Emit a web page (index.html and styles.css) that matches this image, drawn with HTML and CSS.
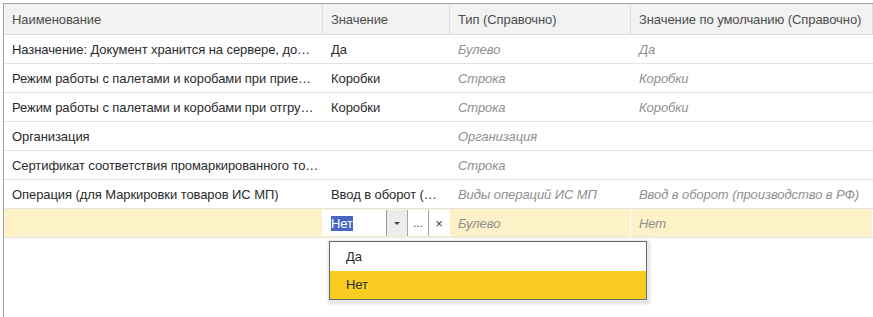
FILE: index.html
```html
<!DOCTYPE html>
<html lang="ru">
<head>
<meta charset="utf-8">
<title>Реквизиты</title>
<link rel="stylesheet" href="styles.css">
</head>
<body>
<div class="grid-wrap">
  <div class="row head">
    <div class="cell">Наименование</div>
    <div class="cell">Значение</div>
    <div class="cell">Тип (Справочно)</div>
    <div class="cell">Значение по умолчанию (Справочно)</div>
  </div>
  <div class="row">
    <div class="cell">Назначение: Документ хранится на сервере, до…</div>
    <div class="cell">Да</div>
    <div class="cell ref">Булево</div>
    <div class="cell ref">Да</div>
  </div>
  <div class="row">
    <div class="cell">Режим работы с палетами и коробами при прие…</div>
    <div class="cell">Коробки</div>
    <div class="cell ref">Строка</div>
    <div class="cell ref">Коробки</div>
  </div>
  <div class="row">
    <div class="cell">Режим работы с палетами и коробами при отгру…</div>
    <div class="cell">Коробки</div>
    <div class="cell ref">Строка</div>
    <div class="cell ref">Коробки</div>
  </div>
  <div class="row">
    <div class="cell">Организация</div>
    <div class="cell"></div>
    <div class="cell ref">Организация</div>
    <div class="cell ref"></div>
  </div>
  <div class="row">
    <div class="cell">Сертификат соответствия промаркированного то…</div>
    <div class="cell"></div>
    <div class="cell ref">Строка</div>
    <div class="cell ref"></div>
  </div>
  <div class="row">
    <div class="cell">Операция (для Маркировки товаров ИС МП)</div>
    <div class="cell">Ввод в оборот (…</div>
    <div class="cell ref">Виды операций ИС МП</div>
    <div class="cell ref">Ввод в оборот (производство в РФ)</div>
  </div>
  <div class="row editing">
    <div class="cell"></div>
    <div class="cell editor-cell">
      <div class="editor">
        <div class="editor-input"><span class="sel">Нет</span></div>
        <div class="editor-btn drop"><span class="tri"></span></div>
        <div class="editor-btn">...</div>
        <div class="editor-btn clear">×</div>
      </div>
    </div>
    <div class="cell ref">Булево</div>
    <div class="cell ref">Нет</div>
  </div>

  <div class="popup">
    <div class="popup-item">Да</div>
    <div class="popup-item active">Нет</div>
  </div>
</div>
</body>
</html>
```
FILE: styles.css
```css
* { box-sizing: border-box; }

html, body {
  margin: 0;
  padding: 0;
  background: #fff;
  font-family: "Liberation Sans", Arial, sans-serif;
  font-size: 13px;
  letter-spacing: -0.08px;
  color: #2b2b2b;
  overflow: hidden;
}

.grid-wrap {
  position: relative;
  margin: 3px 0 0 3px;
  height: 314px;
  border-top: 1px solid #a3a3a3;
  border-left: 1px solid #a3a3a3;
  overflow: hidden;
}

.row {
  display: grid;
  grid-template-columns: 319px 127px 181px 1fr;
  height: 29px;
  border-bottom: 1px solid #e4e4e4;
}

.cell {
  min-width: 0;
  padding: 1px 1px 0 8px;
  border-right: 1px solid #fff;
  white-space: nowrap;
  overflow: hidden;
  text-overflow: ellipsis;
  line-height: 27px;
}

.row.head {
  height: 31px;
  background: #f2f2f2;
  border-bottom: 1px solid #dcdcdc;
  color: #4d4d4d;
}

.row.head .cell {
  line-height: 29px;
  border-right: 1px solid #dcdcdc;
}

.ref {
  font-style: italic;
  color: #8f8f8f;
}

.row.editing .cell {
  background: #fdf1c7;
}

.row.editing .editor-cell {
  padding: 1px 0;
  display: flex;
}

.editor {
  flex: 1;
  display: flex;
  height: 26px;
  background: #fff;
}

.editor-input {
  flex: 1;
  display: flex;
  align-items: center;
  padding: 1px 0 0 8px;
}

.sel {
  background: #4a66c4;
  color: #fff;
  line-height: 15px;
}

.editor-btn {
  width: 21px;
  border-left: 1px solid #a6a6a6;
  display: flex;
  align-items: center;
  justify-content: center;
  color: #555;
  font-size: 12px;
  line-height: 1;
}

.editor-btn.drop {
  background: #ececec;
  border-left-color: #9a9a9a;
}

.editor-btn.clear {
  font-size: 13px;
  color: #444;
}

.tri {
  width: 0;
  height: 0;
  border-left: 3px solid transparent;
  border-right: 3px solid transparent;
  border-top: 3px solid #444;
}

.popup {
  position: absolute;
  left: 325px;
  top: 237px;
  width: 318px;
  border: 1px solid #666;
  background: #fff;
  box-shadow: 0 0 0 1px #ebebeb, 1px 2px 3px 2px rgba(0, 0, 0, 0.12);
}

.popup-item {
  height: 29px;
  line-height: 29px;
  padding-left: 16px;
  color: #2b2b2b;
}

.popup-item.active {
  height: 28px;
  line-height: 28px;
  background: #f9cc22;
}
```
